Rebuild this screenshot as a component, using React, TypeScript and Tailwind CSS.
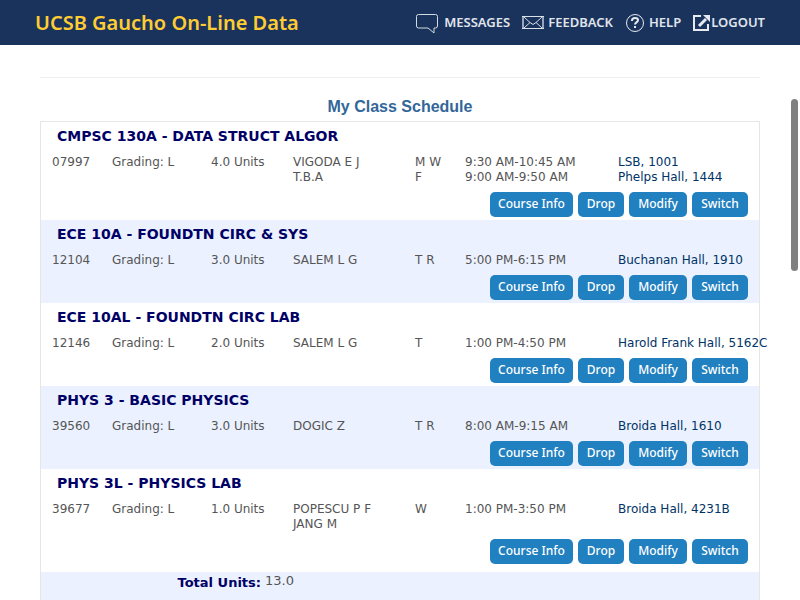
import React from "react";

type Course = {
  title: string;
  code: string;
  units: string;
  instructors: string[];
  days: string[];
  times: string[];
  places: string[];
};

const courses: Course[] = [
  {
    title: "CMPSC 130A - DATA STRUCT ALGOR",
    code: "07997",
    units: "4.0 Units",
    instructors: ["VIGODA E J", "T.B.A"],
    days: ["M W", "F"],
    times: ["9:30 AM-10:45 AM", "9:00 AM-9:50 AM"],
    places: ["LSB, 1001", "Phelps Hall, 1444"],
  },
  {
    title: "ECE 10A - FOUNDTN CIRC & SYS",
    code: "12104",
    units: "3.0 Units",
    instructors: ["SALEM L G"],
    days: ["T R"],
    times: ["5:00 PM-6:15 PM"],
    places: ["Buchanan Hall, 1910"],
  },
  {
    title: "ECE 10AL - FOUNDTN CIRC LAB",
    code: "12146",
    units: "2.0 Units",
    instructors: ["SALEM L G"],
    days: ["T"],
    times: ["1:00 PM-4:50 PM"],
    places: ["Harold Frank Hall, 5162C"],
  },
  {
    title: "PHYS 3 - BASIC PHYSICS",
    code: "39560",
    units: "3.0 Units",
    instructors: ["DOGIC Z"],
    days: ["T R"],
    times: ["8:00 AM-9:15 AM"],
    places: ["Broida Hall, 1610"],
  },
  {
    title: "PHYS 3L - PHYSICS LAB",
    code: "39677",
    units: "1.0 Units",
    instructors: ["POPESCU P F", "JANG M"],
    days: ["W"],
    times: ["1:00 PM-3:50 PM"],
    places: ["Broida Hall, 4231B"],
  },
];

const actions = [
  { label: "Course Info", width: "w-[83px]" },
  { label: "Drop", width: "w-[46px]" },
  { label: "Modify", width: "w-[58px]" },
  { label: "Switch", width: "w-[56px]" },
];

function MessageIcon() {
  return (
    <svg width="24" height="22" viewBox="0 0 24 22" fill="none" stroke="#d5dbe3" aria-hidden="true">
      <path d="M2.500 2.500h17a2 2 0 0 1 2 2v9.500a2 2 0 0 1-2 2h-1.500v5l-6-5h-9.500a2 2 0 0 1-2-2v-9.500a2 2 0 0 1 2-2z" />
    </svg>
  );
}

function MailIcon() {
  return (
    <svg width="22" height="16" viewBox="0 0 22 16" fill="none" stroke="#dce1e8" aria-hidden="true">
      <path d="M1 2v12M21 2v12" stroke="#97a5ba" strokeWidth="2" />
      <path d="M0 2.500h22M0 14.500h22" />
      <path d="M2 3l6 5.500 3 2 3-2L20 3M2 14l6-5.500M20 14l-6-5.500" />
    </svg>
  );
}

function HelpIcon() {
  return (
    <svg width="20" height="20" viewBox="0 0 20 20" fill="none" stroke="#e6eaf0" aria-hidden="true">
      <circle cx="10" cy="10" r="8.500" />
      <path d="M7 8V7.500C7 5.700 8.200 5 10 5s3 .8 3 2.300c0 2-3 2.200-3 4.200" strokeWidth="2" />
      <path d="M10 13v2" strokeWidth="2" />
    </svg>
  );
}

function LogoutIcon() {
  return (
    <svg width="18" height="18" viewBox="0 0 18 18" fill="none" stroke="#e6eaf0" aria-hidden="true">
      <path d="M8 2H1v14h14v-6" strokeWidth="2" />
      <path d="M6 12l7-7" strokeWidth="3" />
      <path d="M10 1h7v7z" fill="#e6eaf0" stroke="none" />
    </svg>
  );
}

function Lines({ items }: { items: string[] }) {
  return (
    <>
      {items.map((item) => (
        <div key={item}>{item}</div>
      ))}
    </>
  );
}

export default function App() {
  return (
    <div className="min-h-screen overflow-x-hidden bg-white font-['DejaVu_Sans',Verdana,sans-serif] text-xs text-[#555]">
      <header className="flex h-[45px] items-center justify-between bg-[#19335d] pr-[35px] pl-[35px] font-['Noto_Sans',sans-serif]">
        <h1 className="text-xl font-semibold whitespace-nowrap text-[#fc3]">UCSB Gaucho On-Line Data</h1>
        <nav className="flex items-center gap-3 text-[13px] font-semibold whitespace-nowrap text-[#e0e4eb]">
          <a href="#messages" className="flex items-center gap-1">
            <MessageIcon />
            MESSAGES
          </a>
          <a href="#feedback" className="flex items-center gap-1">
            <MailIcon />
            FEEDBACK
          </a>
          <a href="#help" className="flex items-center gap-1">
            <HelpIcon />
            HELP
          </a>
          <a href="#logout" className="flex items-center">
            <LogoutIcon />
            LOGOUT
          </a>
        </nav>
      </header>

      <main className="px-10 pt-8">
        <hr className="border-[#eee]" />
        <h2 className="pt-[17px] pb-[2px] text-center font-['Liberation_Sans',Arial,sans-serif] text-base leading-6 font-bold text-[#369]">
          My Class Schedule
        </h2>
        <div className="border border-b-0 border-[#e6e6e6]">
          <table className="w-full table-fixed border-collapse text-left leading-[15px] whitespace-nowrap">
            <colgroup>
              <col className="w-[71px]" />
              <col className="w-[99px]" />
              <col className="w-[54px]" />
              <col className="w-[28px]" />
              <col className="w-[122px]" />
              <col className="w-[50px]" />
              <col className="w-[153px]" />
              <col />
            </colgroup>
            {courses.map((course, index) => (
              <tbody key={course.code} className={index % 2 === 1 ? "group bg-[#ebf1fe]" : "group"}>
                <tr>
                  <th colSpan={8} scope="rowgroup" className="h-7 px-4 text-sm font-bold text-[#006]">
                    {course.title}
                  </th>
                </tr>
                <tr className="align-top">
                  <td className="pt-[5px] pl-[11px]">{course.code}</td>
                  <td className="pt-[5px]">Grading: L</td>
                  <td colSpan={2} className="pt-[5px]">{course.units}</td>
                  <td className="pt-[5px]"><Lines items={course.instructors} /></td>
                  <td className="pt-[5px]"><Lines items={course.days} /></td>
                  <td className="pt-[5px]"><Lines items={course.times} /></td>
                  <td className="pt-[5px] text-[#036]">
                    {course.places.map((place) => (
                      <a key={place} href="#map" className="block">{place}</a>
                    ))}
                  </td>
                </tr>
                <tr>
                  <td colSpan={8} className="pt-[7px] pr-[11px] pb-[3px] group-last-of-type:pb-2">
                    <div className="flex justify-end gap-[5px]">
                      {actions.map((action) => (
                        <button
                          key={action.label}
                          type="button"
                          className={action.width + " h-[25px] rounded-[5px] bg-[#2180c0] pb-[2px] font-['Noto_Sans',sans-serif] text-xs font-medium text-white"}
                        >
                          {action.label}
                        </button>
                      ))}
                    </div>
                  </td>
                </tr>
              </tbody>
            ))}
            <tfoot className="bg-[#ebf1fe]">
              <tr className="h-7 align-top">
                <th colSpan={3} scope="row" className="pt-[3px] pr-1 text-right text-[13px] font-bold text-[#006]">
                  Total Units:
                </th>
                <td colSpan={5} className="pt-[1px] text-[13px]">13.0</td>
              </tr>
            </tfoot>
          </table>
        </div>
      </main>
      <div className="fixed top-[99px] right-[2px] h-[172px] w-[7px] rounded-full bg-[#808080]" aria-hidden="true" />
    </div>
  );
}
